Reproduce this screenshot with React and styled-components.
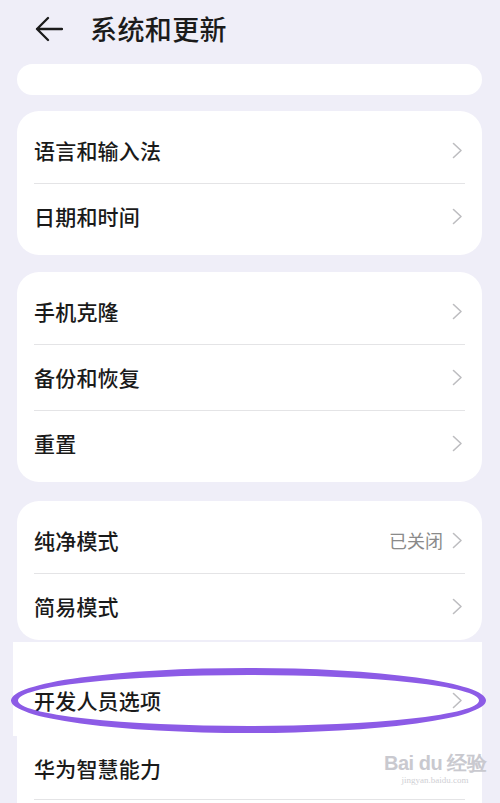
import React from "react";
import styled, { createGlobalStyle } from "styled-components";

const GlobalStyle = createGlobalStyle`
  *, *::before, *::after { box-sizing: border-box; }
  html, body { margin: 0; padding: 0; background: #efeef8; }
  body { font-family: "Noto Sans CJK SC", "Noto Sans", sans-serif; }
`;

const Page = styled.div`
  position: relative;
  width: 500px;
  height: 803px;
  overflow: hidden;
  background: #efeef8;
`;

const Header = styled.header`
  height: 58px;
  display: flex;
  align-items: center;
  padding-left: 35px;
  gap: 27px;
`;

const Title = styled.h1`
  margin: -2px 0 0 0;
  font-size: 27px;
  font-weight: 500;
  color: #1b1b1b;
  letter-spacing: 0.4px;
`;

const Content = styled.main`
  padding: 0 18px 0 17px;
  display: flex;
  flex-direction: column;
`;

const PeekCard = styled.div`
  height: 31px;
  margin-top: 6px;
  background: #fff;
  border-radius: 16px;
`;

const Card = styled.section`
  background: #fff;
  border-radius: 22px;
  padding: 6px 0 ${(p) => (p.$cut ? 1 : 6)}px;
  margin-top: ${(p) => p.$gap || 16}px;
`;

const Row = styled.div`
  position: relative;
  height: ${(p) => p.$h || 66}px;
  display: flex;
  align-items: center;
  padding: 0 19px 0 17px;
  &::before {
    content: "";
    display: ${(p) => (p.$divider ? "block" : "none")};
    position: absolute;
    top: 0;
    left: 17px;
    right: 17px;
    height: 1px;
    background: #e4e4e6;
  }
`;

const Label = styled.span`
  flex: 1;
  font-size: 21px;
  font-weight: 500;
  color: #1a1a1a;
  letter-spacing: 0.2px;
`;

const Value = styled.span`
  font-size: 18px;
  color: #8a8a8a;
  margin-right: 9px;
`;

const Highlight = styled.div`
  margin: 2px 0 0 -4px;
  height: 94px;
  background: #fff;
  display: flex;
  flex-direction: column;
  justify-content: flex-end;
  padding: 0 0 3px 4px;
`;

const TailCard = styled.section`
  background: #fff;
  height: 80px;
`;

const BottomRow = styled(Row)`
  &::after {
    content: "";
    position: absolute;
    bottom: 0;
    left: 17px;
    right: 17px;
    height: 1px;
    background: #e4e4e6;
  }
`;

const Ellipse = styled.div`
  position: absolute;
  left: 11px;
  top: 668px;
  width: 475px;
  height: 65px;
  border: 7px solid #8c5be6;
  border-radius: 50%;
  pointer-events: none;
`;

const Watermark = styled.div`
  position: absolute;
  left: 384px;
  top: 752px;
  display: flex;
  flex-direction: column;
  align-items: center;
  color: #c9c9cf;
  pointer-events: none;
`;

const WmMain = styled.span`
  font-family: "Liberation Sans", sans-serif;
  font-size: 20px;
  font-weight: 700;
  letter-spacing: -0.5px;
  line-height: 22px;
`;

const WmSub = styled.span`
  font-family: "Liberation Serif", serif;
  font-size: 9px;
  line-height: 12px;
  color: #cfcfd4;
`;

const Chevron = () => (
  <svg width="11" height="17" viewBox="0 0 11 17" aria-hidden="true">
    <path d="M1.5 1.5 L9 8.5 L1.5 15.5" fill="none" stroke="#bdbdc0" strokeWidth="1.6" strokeLinecap="round" strokeLinejoin="round" />
  </svg>
);

const BackArrow = () => (
  <svg width="28" height="26" viewBox="0 0 28 26" aria-hidden="true">
    <path d="M13 2 L2 13 L13 24 M2 13 H27" fill="none" stroke="#1b1b1b" strokeWidth="2.3" strokeLinecap="round" strokeLinejoin="round" />
  </svg>
);

const Item = ({ label, value, divider, noChevron }) => (
  <Row $divider={divider}>
    <Label>{label}</Label>
    {value && <Value>{value}</Value>}
    {!noChevron && <Chevron />}
  </Row>
);

export default function App() {
  return (
    <Page>
      <GlobalStyle />
      <Header>
        <BackArrow />
        <Title>系统和更新</Title>
      </Header>
      <Content>
        <PeekCard />
        <Card $gap={16}>
          <Item label="语言和输入法" />
          <Item label="日期和时间" divider />
        </Card>
        <Card $gap={17}>
          <Item label="手机克隆" />
          <Item label="备份和恢复" divider />
          <Item label="重置" divider />
        </Card>
        <Card $gap={19} $cut>
          <Item label="纯净模式" value="已关闭" />
          <Item label="简易模式" divider />
        </Card>
        <Highlight>
          <Item label="开发人员选项" />
        </Highlight>
        <TailCard>
          <BottomRow $h={64}>
            <Label>华为智慧能力</Label>
          </BottomRow>
        </TailCard>
      </Content>
      <Ellipse />
      <Watermark>
        <WmMain>Bai du 经验</WmMain>
        <WmSub>jingyan.baidu.com</WmSub>
      </Watermark>
    </Page>
  );
}
